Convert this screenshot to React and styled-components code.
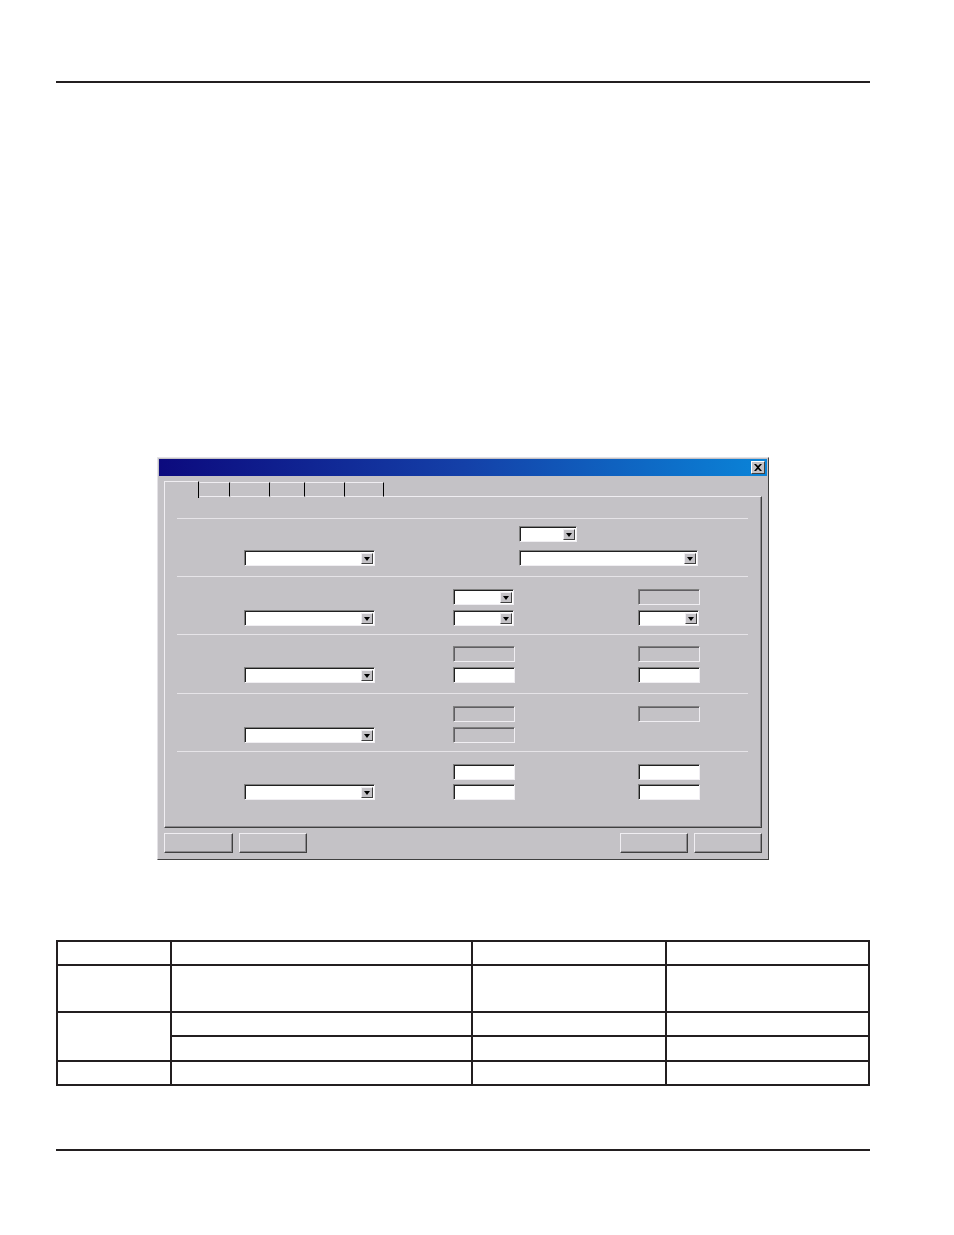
import React from 'react'
import styled, { createGlobalStyle } from 'styled-components'

const Global = createGlobalStyle`
  html, body { margin: 0; padding: 0; background: #fff; }
  body { font-family: "Liberation Sans", Arial, sans-serif; }
`

const Page = styled.div`
  width: 954px;
  height: 1235px;
  position: relative;
  overflow: hidden;
  padding-top: 81px;
  box-sizing: border-box;
`

const Rule = styled.div`
  margin-left: 56px;
  width: 814px;
  height: 2px;
  background: #231f20;
  margin-top: ${(p) => p.top || 0}px;
`

const Window = styled.div`
  margin: 374px 0 0 157px;
  width: 612px;
  height: 403px;
  box-sizing: border-box;
  background: #c4c2c6;
  border: 1px solid;
  border-color: #e4e2e6 #404040 #404040 #e4e2e6;
  padding: 1px;
  display: flex;
  flex-direction: column;
`

const TitleBar = styled.div`
  height: 17px;
  background: linear-gradient(to right, #0c0a7e 0%, #1440a8 50%, #0a84d8 100%);
  display: flex;
  align-items: center;
  justify-content: flex-end;
  padding-right: 2px;
`

const CloseBtn = styled.div`
  width: 14px;
  height: 13px;
  box-sizing: border-box;
  background: #c4c2c6;
  border: 1px solid;
  border-color: #fff #404040 #404040 #fff;
  display: flex;
  align-items: center;
  justify-content: center;
`

const Body = styled.div`
  padding: 5px 5px 0 5px;
  display: flex;
  flex-direction: column;
`

const TabStrip = styled.div`
  display: flex;
  align-items: flex-end;
  height: 16px;
  position: relative;
  z-index: 1;
`

const Tab = styled.div`
  width: ${(p) => p.w}px;
  height: ${(p) => (p.active ? 17 : 15)}px;
  box-sizing: border-box;
  background: #c4c2c6;
  border-top: 1px solid #f0eef2;
  border-left: 1px solid ${(p) => (p.first || p.active ? '#f0eef2' : '#c4c2c6')};
  border-right: 1px solid #000;
  margin-bottom: ${(p) => (p.active ? -1 : 0)}px;
  border-bottom: ${(p) => (p.active ? 'none' : '1px solid #f0eef2')};
`

const Panel = styled.div`
  width: 598px;
  height: 332px;
  box-sizing: border-box;
  border: 1px solid;
  border-color: #f0eef2 #404040 #404040 #f0eef2;
  box-shadow: inset -1px -1px 0 #8c8a8e;
  padding: 21px 13px 0 12px;
  margin-top: -1px;
`

const Section = styled.div`
  border-top: 1px solid #e6e4e8;
  height: ${(p) => p.h}px;
  box-sizing: border-box;
  padding-top: ${(p) => p.pt}px;
  display: grid;
  grid-template-columns: 67px 131px 78px 62px 4px 119px 62px 1fr;
  grid-template-rows: 16px 16px;
  row-gap: ${(p) => p.gap}px;
  align-content: start;
`

const Cell = styled.div`
  grid-column: ${(p) => p.col} / span ${(p) => p.span || 1};
  grid-row: ${(p) => p.row};
`

const Field = styled.div`
  width: ${(p) => p.w}px;
  height: 16px;
  box-sizing: border-box;
  background: ${(p) => (p.disabled ? '#c4c2c6' : '#fff')};
  border: 1px solid;
  border-color: #808080 #f0eef2 #f0eef2 #808080;
  box-shadow: inset 1px 1px 0 ${(p) => (p.disabled ? '#605e62' : '#202020')};
  display: flex;
  justify-content: flex-end;
  padding: 2px 1px 1px 2px;
`

const DropBtn = styled.div`
  width: 12px;
  height: 11px;
  box-sizing: border-box;
  background: #c4c2c6;
  border: 1px solid;
  border-color: #f0eef2 #404040 #404040 #f0eef2;
  display: flex;
  align-items: center;
  justify-content: center;
`

const Arrow = styled.div`
  width: 0;
  height: 0;
  border-left: 3px solid transparent;
  border-right: 3px solid transparent;
  border-top: 4px solid #000;
`

const Footer = styled.div`
  display: flex;
  justify-content: space-between;
  margin-top: 5px;
`

const BtnGroup = styled.div`
  display: flex;
  gap: 6px;
`

const Btn = styled.div`
  width: ${(p) => p.w}px;
  height: 20px;
  box-sizing: border-box;
  background: #c4c2c6;
  border: 1px solid;
  border-color: #f0eef2 #404040 #404040 #f0eef2;
  box-shadow: inset -1px -1px 0 #8c8a8e;
`

const Table = styled.table`
  margin: 80px 0 0 56px;
  width: 814px;
  border-collapse: collapse;
  td {
    border: 2px solid #231f20;
    padding: 0;
  }
`

const Row = styled.tr`
  height: ${(p) => p.h}px;
`

const Combo = ({ w }) => (
  <Field w={w}>
    <DropBtn>
      <Arrow />
    </DropBtn>
  </Field>
)

const tabs = [35, 31, 40, 35, 40, 39]

export default function App() {
  return (
    <Page>
      <Global />
      <Rule />
      <Window>
        <TitleBar>
          <CloseBtn>
            <svg width="8" height="7" viewBox="0 0 8 7">
              <path d="M0 0 L2 0 L4 2 L6 0 L8 0 L5 3.5 L8 7 L6 7 L4 5 L2 7 L0 7 L3 3.5 Z" fill="#000" />
            </svg>
          </CloseBtn>
        </TitleBar>
        <Body>
          <TabStrip>
            {tabs.map((w, i) => (
              <Tab key={i} w={w} active={i === 0} first={i === 0} />
            ))}
          </TabStrip>
          <Panel>
            <Section h={58} pt={7} gap={8}>
              <Cell col={6} row={1}><Combo w={58} /></Cell>
              <Cell col={2} row={2}><Combo w={131} /></Cell>
              <Cell col={6} span={2} row={2}><Combo w={179} /></Cell>
            </Section>
            <Section h={58} pt={12} gap={5}>
              <Cell col={4} row={1}><Combo w={61} /></Cell>
              <Cell col={7} row={1}><Field w={62} disabled /></Cell>
              <Cell col={2} row={2}><Combo w={131} /></Cell>
              <Cell col={4} row={2}><Combo w={61} /></Cell>
              <Cell col={7} row={2}><Combo w={61} /></Cell>
            </Section>
            <Section h={59} pt={11} gap={5}>
              <Cell col={4} row={1}><Field w={62} disabled /></Cell>
              <Cell col={7} row={1}><Field w={62} disabled /></Cell>
              <Cell col={2} row={2}><Combo w={131} /></Cell>
              <Cell col={4} row={2}><Field w={62} /></Cell>
              <Cell col={7} row={2}><Field w={62} /></Cell>
            </Section>
            <Section h={58} pt={12} gap={5}>
              <Cell col={4} row={1}><Field w={62} disabled /></Cell>
              <Cell col={7} row={1}><Field w={62} disabled /></Cell>
              <Cell col={2} row={2}><Combo w={131} /></Cell>
              <Cell col={4} row={2}><Field w={62} disabled /></Cell>
            </Section>
            <Section h={70} pt={12} gap={4}>
              <Cell col={4} row={1}><Field w={62} /></Cell>
              <Cell col={7} row={1}><Field w={62} /></Cell>
              <Cell col={2} row={2}><Combo w={131} /></Cell>
              <Cell col={4} row={2}><Field w={62} /></Cell>
              <Cell col={7} row={2}><Field w={62} /></Cell>
            </Section>
          </Panel>
          <Footer>
            <BtnGroup>
              <Btn w={69} />
              <Btn w={68} />
            </BtnGroup>
            <BtnGroup>
              <Btn w={68} />
              <Btn w={68} />
            </BtnGroup>
          </Footer>
        </Body>
      </Window>
      <Table>
        <colgroup>
          <col style={{ width: 114 }} />
          <col style={{ width: 302 }} />
          <col style={{ width: 194 }} />
          <col style={{ width: 203 }} />
        </colgroup>
        <tbody>
          <Row h={24}><td /><td /><td /><td /></Row>
          <Row h={47}><td /><td /><td /><td /></Row>
          <Row h={24}><td rowSpan={2} /><td /><td /><td /></Row>
          <Row h={25}><td /><td /><td /></Row>
          <Row h={24}><td /><td /><td /><td /></Row>
        </tbody>
      </Table>
      <Rule top={63} />
    </Page>
  )
}
